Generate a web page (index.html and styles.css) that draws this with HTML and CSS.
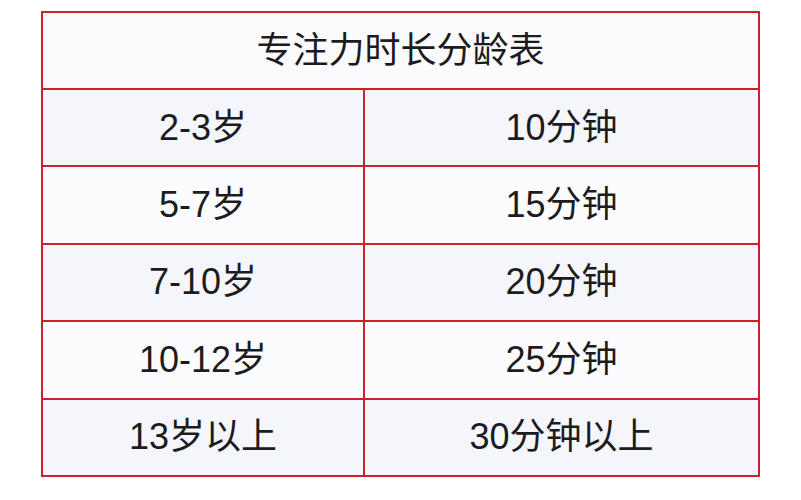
FILE: index.html
```html
<!DOCTYPE html>
<html lang="zh-CN">
<head>
<meta charset="utf-8">
<link rel="stylesheet" href="styles.css">
</head>
<body>
<table class="age-table">
  <colgroup>
    <col class="col-age">
    <col class="col-time">
  </colgroup>
  <thead>
    <tr class="row-head"><th colspan="2">专注力时长分龄表</th></tr>
  </thead>
  <tbody>
    <tr class="row-tint"><td>2-3岁</td><td>10分钟</td></tr>
    <tr class="row-plain"><td>5-7岁</td><td>15分钟</td></tr>
    <tr class="row-tint"><td>7-10岁</td><td>20分钟</td></tr>
    <tr class="row-plain"><td>10-12岁</td><td>25分钟</td></tr>
    <tr class="row-tint"><td>13岁以上</td><td>30分钟以上</td></tr>
  </tbody>
</table>
</body>
</html>
```

FILE: styles.css
```css
html, body {
  margin: 0;
  padding: 0;
  background: #ffffff;
}

body {
  padding: 11px 0 0 41px;
  font-family: "Liberation Sans", "Noto Sans CJK SC", sans-serif;
  color: #1c1c1e;
}

.age-table {
  border-collapse: collapse;
  width: 717px;
  table-layout: fixed;
}

.col-age { width: 322px; }
.col-time { width: 395px; }

.age-table th,
.age-table td {
  border: 2px solid #cf1f29;
  height: 75.4px;
  padding: 0;
  text-align: center;
  vertical-align: middle;
  font-size: 36px;
  font-weight: normal;
  line-height: 1;
}

.row-head th { background: #fbfbfd; height: 75px; }
.row-tint td { background: #f4f6fb; }
.row-plain td { background: #fcfcfe; }
```
